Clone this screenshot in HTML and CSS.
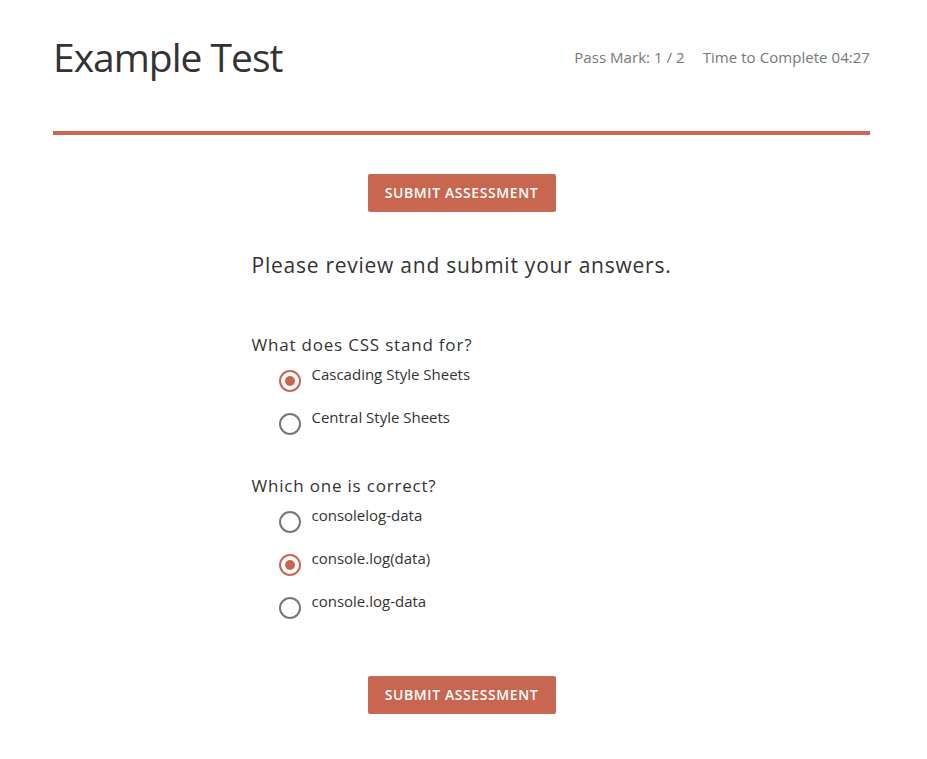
FILE: index.html
```html
<!DOCTYPE html>
<html lang="en">
<head>
<meta charset="utf-8">
<title>Example Test</title>
<link rel="stylesheet" href="styles.css">
</head>
<body>
<div class="page">
  <header class="header">
    <h1 class="title">Example Test</h1>
    <div class="meta">
      <span>Pass Mark: 1 / 2</span>
      <span>Time to Complete 04:27</span>
    </div>
  </header>
  <main class="main">
    <div class="actions"><button class="btn">SUBMIT ASSESSMENT</button></div>
    <div class="column">
      <h2 class="intro">Please review and submit your answers.</h2>
      <div class="question">
        <div class="q-text">What does CSS stand for?</div>
        <label class="option"><span class="radio checked"></span><span class="opt-text">Cascading Style Sheets</span></label>
        <label class="option"><span class="radio"></span><span class="opt-text">Central Style Sheets</span></label>
      </div>
      <div class="question">
        <div class="q-text">Which one is correct?</div>
        <label class="option"><span class="radio"></span><span class="opt-text">consolelog-data</span></label>
        <label class="option"><span class="radio checked"></span><span class="opt-text">console.log(data)</span></label>
        <label class="option"><span class="radio"></span><span class="opt-text">console.log-data</span></label>
      </div>
    </div>
    <div class="actions bottom"><button class="btn">SUBMIT ASSESSMENT</button></div>
  </main>
</div>
</body>
</html>
```

FILE: styles.css
```css
* { box-sizing: border-box; }
html, body { margin: 0; padding: 0; background: #fff; }
body {
  font-family: "Open Sans", "Liberation Sans", sans-serif;
  color: #333;
}
.page {
  width: 817px;
  margin-left: 53px;
}
.header {
  display: flex;
  justify-content: space-between;
  align-items: center;
  padding-top: 33px;
  padding-bottom: 50px;
  border-bottom: 4px solid #c96650;
}
.title {
  margin: 0;
  font-size: 39px;
  line-height: 48px;
  letter-spacing: -1px;
  font-weight: 400;
  color: #333;
}
.meta {
  display: flex;
  gap: 18px;
  font-size: 15px;
  line-height: 20px;
  color: #777;
  letter-spacing: 0.05px;
}
.main {
  padding-top: 39px;
}
.actions {
  display: flex;
  justify-content: center;
}
.actions.bottom {
  margin-top: 57px;
}
.btn {
  font-family: "Open Sans", "Liberation Sans", sans-serif;
  font-size: 14px;
  font-weight: 600;
  letter-spacing: 0.6px;
  line-height: 20px;
  color: #fff;
  background: #c96650;
  border: none;
  border-radius: 2px;
  padding: 9px 0;
  width: 188px;
}
.column {
  width: 420px;
  margin: 39px auto 0;
}
.intro {
  margin: 0;
  font-size: 21px;
  line-height: 28px;
  letter-spacing: 0.75px;
  font-weight: 400;
  color: #333;
}
.question {
  margin-top: 54px;
}
.question + .question {
  margin-top: 39px;
}
.q-text {
  font-size: 17px;
  line-height: 24px;
  letter-spacing: 0.8px;
  color: #333;
  margin-bottom: 8px;
}
.option {
  display: flex;
  align-items: flex-start;
  height: 27px;
  margin-left: 27px;
}
.option + .option {
  margin-top: 16px;
}
.radio {
  width: 22px;
  height: 22px;
  margin-top: 5px;
  border: 2px solid #777;
  border-radius: 50%;
  display: flex;
  align-items: center;
  justify-content: center;
  flex: none;
}
.radio.checked {
  border-color: #c96650;
}
.radio.checked::after {
  content: "";
  width: 10px;
  height: 10px;
  border-radius: 50%;
  background: #c96650;
}
.opt-text {
  margin-left: 11px;
  margin-top: -1px;
  font-size: 15px;
  line-height: 20px;
  color: #333;
}
```
